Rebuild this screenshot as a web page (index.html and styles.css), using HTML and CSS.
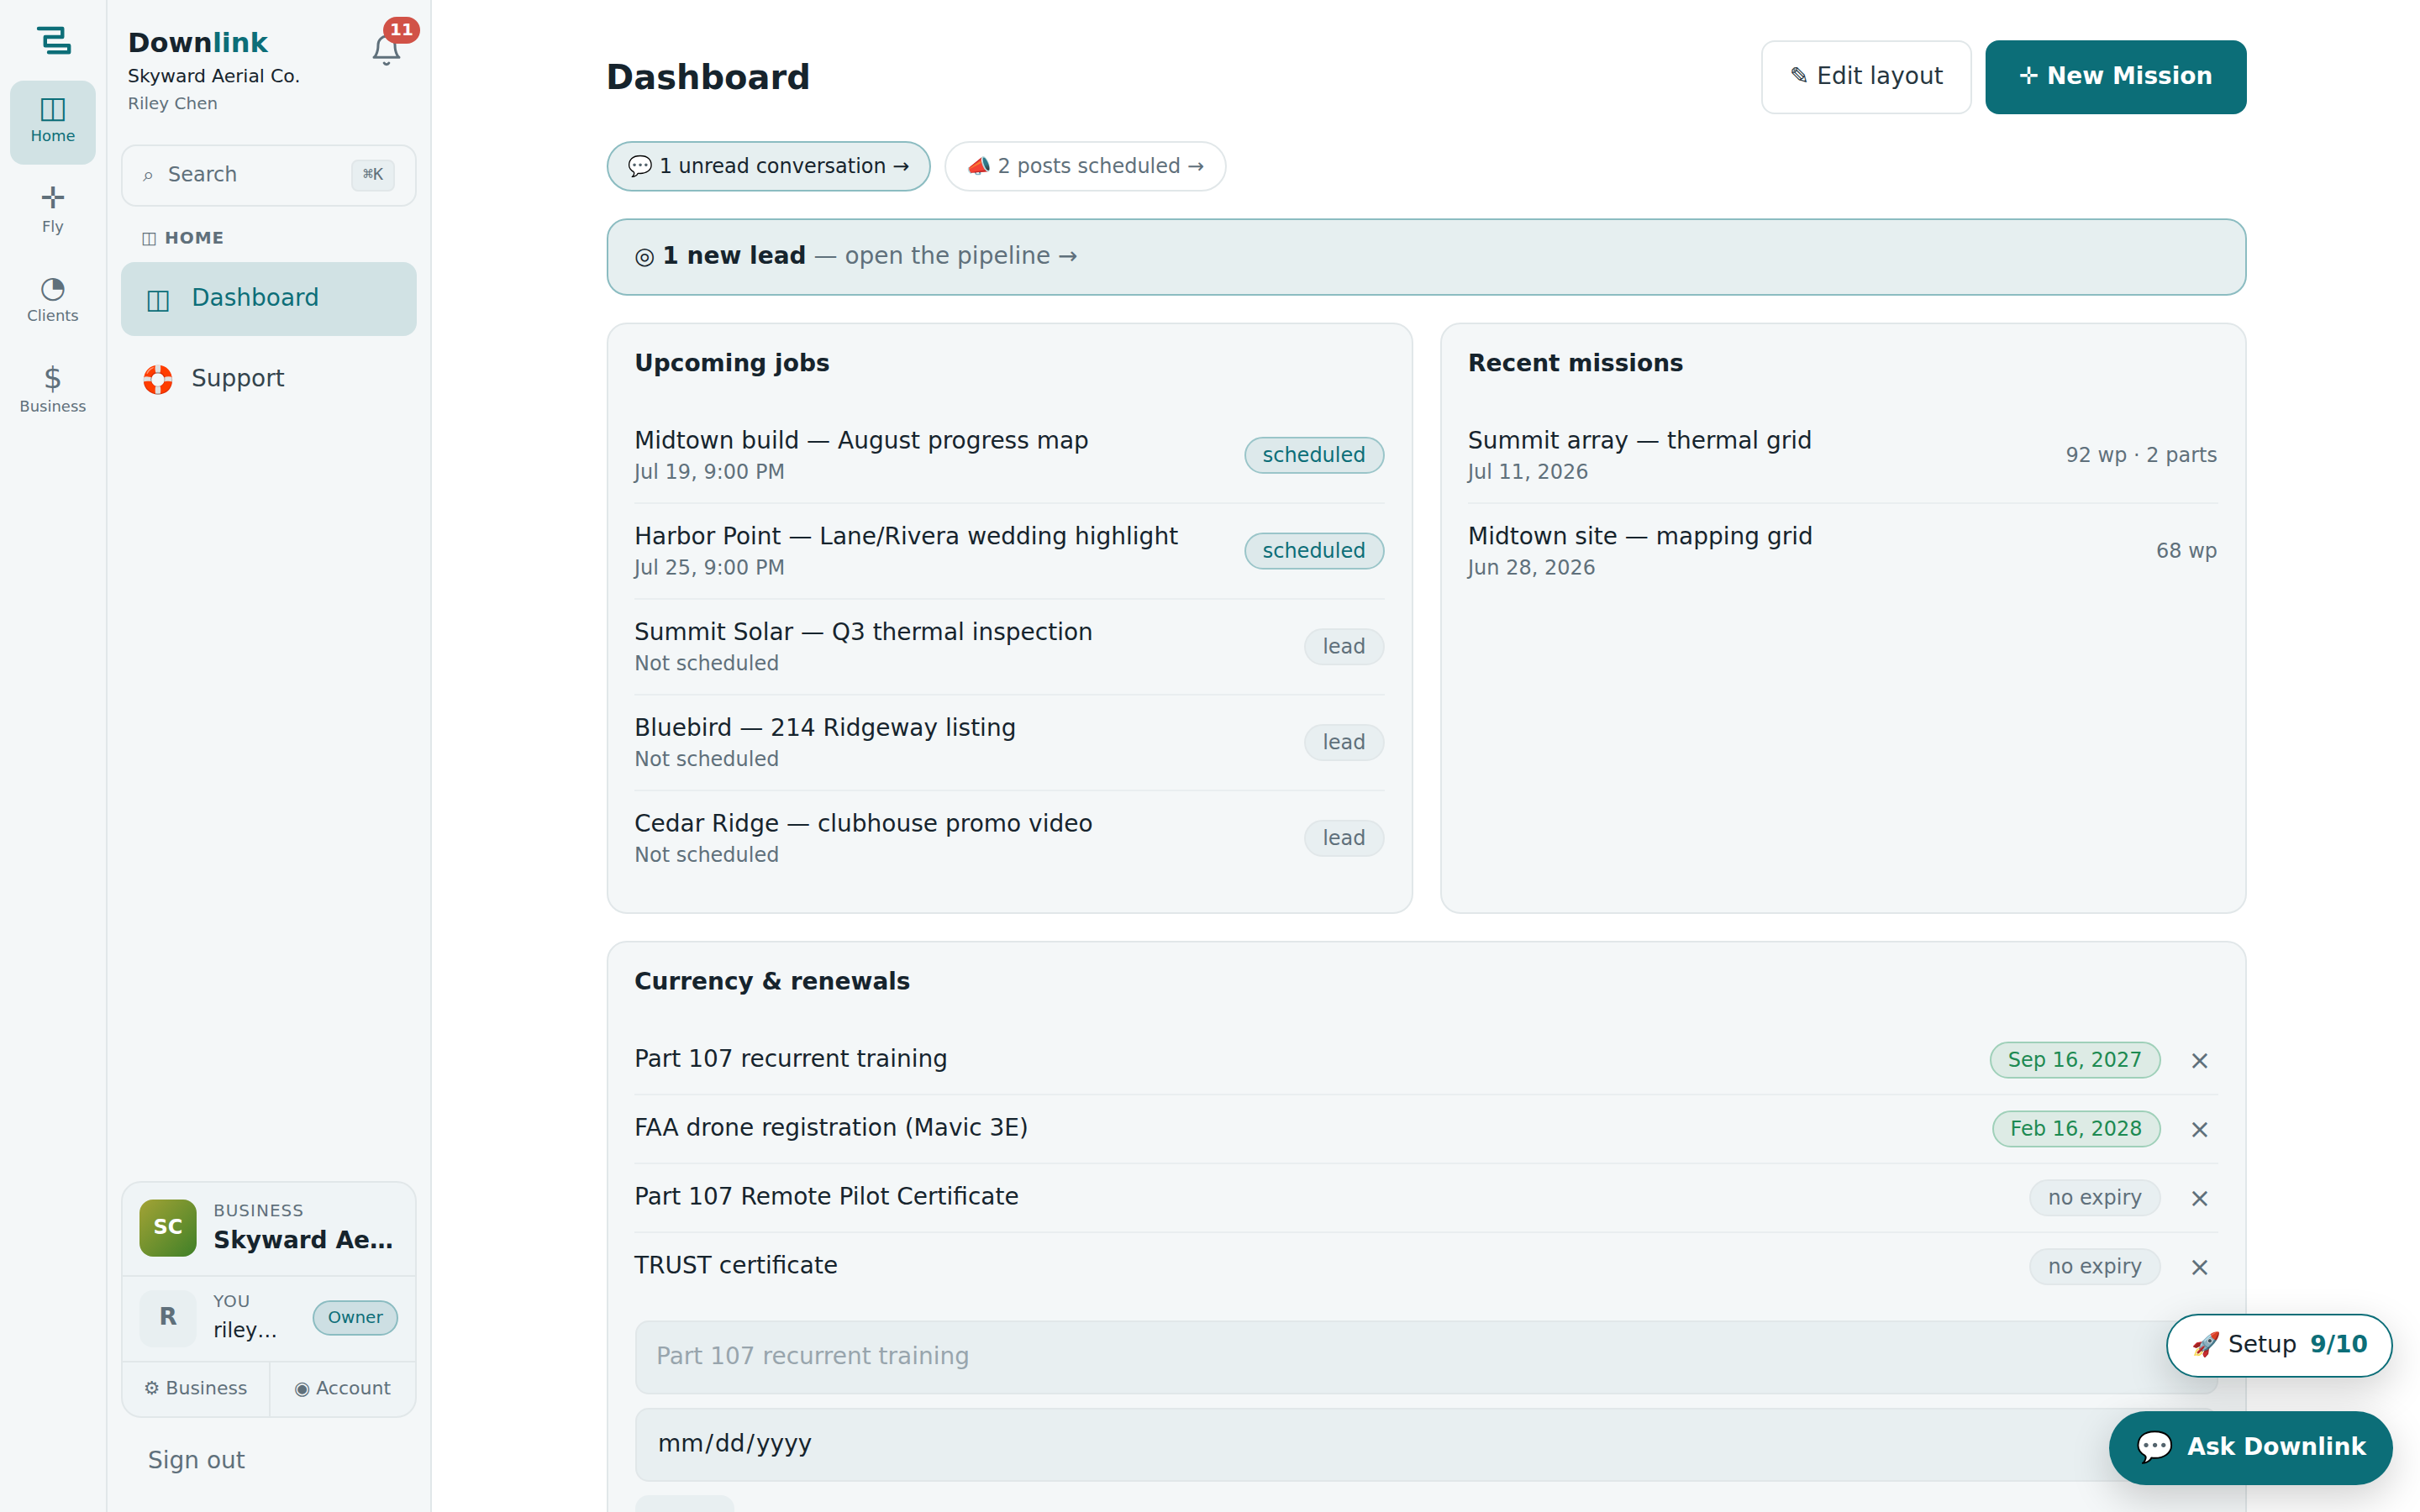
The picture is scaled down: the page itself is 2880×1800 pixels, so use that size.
FILE: index.html
```html
<!DOCTYPE html>
<html lang="en">
<head>
<meta charset="utf-8">
<title>Downlink — Dashboard</title>
<link rel="stylesheet" href="styles.css">
</head>
<body>
<div class="app">
  <nav class="rail">
    <svg class="logo" viewBox="0 0 44 36" width="44" height="36" fill="none" stroke="currentColor" stroke-width="4.4" stroke-linecap="round" stroke-linejoin="round"><path d="M4 4H32.3V14H11.8V24.2H40.2V32.2H16"/></svg>
    <a class="rail-item active"><span class="rail-icon">◫</span><span class="rail-label">Home</span></a>
    <a class="rail-item short"><span class="rail-icon">✛</span><span class="rail-label">Fly</span></a>
    <a class="rail-item"><span class="rail-icon">◔</span><span class="rail-label">Clients</span></a>
    <a class="rail-item"><span class="rail-icon">$</span><span class="rail-label">Business</span></a>
  </nav>

  <aside class="sidebar">
    <header class="brand">
      <div class="brand-text">
        <div class="brand-name">Down<span>link</span></div>
        <div class="brand-org">Skyward Aerial Co.</div>
        <div class="brand-user">Riley Chen</div>
      </div>
      <div class="bell">
        <svg viewBox="0 0 24 24" width="40" height="40" fill="none" stroke="currentColor" stroke-width="1.8" stroke-linecap="round" stroke-linejoin="round"><path d="M6 8a6 6 0 0 1 12 0c0 7 3 9 3 9H3s3-2 3-9"/><path d="M10.3 21a1.94 1.94 0 0 0 3.4 0"/></svg>
        <span class="bell-count">11</span>
      </div>
    </header>
    <div class="search"><span class="search-icon">⌕</span><span class="search-label">Search</span><kbd>⌘K</kbd></div>
    <div class="nav-heading"><span class="nav-heading-icon">◫</span>HOME</div>
    <a class="nav-item active"><span class="nav-icon">◫</span>Dashboard</a>
    <a class="nav-item"><span class="nav-icon">🛟</span>Support</a>

    <div class="account">
      <div class="account-row business">
        <span class="avatar avatar-business">SC</span>
        <div class="account-text"><div class="account-kind">BUSINESS</div><div class="account-name">Skyward Aerial Co.</div></div>
      </div>
      <div class="account-row you">
        <span class="avatar">R</span>
        <div class="account-text"><div class="account-kind">YOU</div><div class="account-mail">riley@skyward.co</div></div>
        <span class="role">Owner</span>
      </div>
      <div class="account-links"><a>⚙ Business</a><a>◉ Account</a></div>
    </div>
    <a class="signout">Sign out</a>
  </aside>

  <main class="main">
    <div class="content">
      <div class="page-head">
        <h1>Dashboard</h1>
        <div class="actions"><button class="btn">✎ Edit layout</button><button class="btn primary">✛ New Mission</button></div>
      </div>
      <div class="chips"><a class="chip on">💬 1 unread conversation →</a><a class="chip">📣 2 posts scheduled →</a></div>
      <a class="banner"><span>◎ <b>1 new lead</b> <span class="muted">— open the pipeline →</span></span></a>
      <div class="cards">
        <section class="card">
          <h2>Upcoming jobs</h2>
          <ul class="rows">
            <li><div><div class="row-title">Midtown build — August progress map</div><div class="row-sub">Jul 19, 9:00 PM</div></div><span class="tag accent">scheduled</span></li>
            <li><div><div class="row-title">Harbor Point — Lane/Rivera wedding highlight</div><div class="row-sub">Jul 25, 9:00 PM</div></div><span class="tag accent">scheduled</span></li>
            <li><div><div class="row-title">Summit Solar — Q3 thermal inspection</div><div class="row-sub">Not scheduled</div></div><span class="tag">lead</span></li>
            <li><div><div class="row-title">Bluebird — 214 Ridgeway listing</div><div class="row-sub">Not scheduled</div></div><span class="tag">lead</span></li>
            <li><div><div class="row-title">Cedar Ridge — clubhouse promo video</div><div class="row-sub">Not scheduled</div></div><span class="tag">lead</span></li>
          </ul>
        </section>
        <section class="card">
          <h2>Recent missions</h2>
          <ul class="rows">
            <li><div><div class="row-title">Summit array — thermal grid</div><div class="row-sub">Jul 11, 2026</div></div><span class="row-meta">92 wp · 2 parts</span></li>
            <li><div><div class="row-title">Midtown site — mapping grid</div><div class="row-sub">Jun 28, 2026</div></div><span class="row-meta">68 wp</span></li>
          </ul>
        </section>
      </div>
      <section class="card">
        <h2>Currency &amp; renewals</h2>
        <ul class="rows compact">
          <li><span class="row-title">Part 107 recurrent training</span><span class="tag good">Sep 16, 2027</span><span class="remove">×</span></li>
          <li><span class="row-title">FAA drone registration (Mavic 3E)</span><span class="tag good">Feb 16, 2028</span><span class="remove">×</span></li>
          <li><span class="row-title">Part 107 Remote Pilot Certificate</span><span class="tag">no expiry</span><span class="remove">×</span></li>
          <li><span class="row-title">TRUST certificate</span><span class="tag">no expiry</span><span class="remove">×</span></li>
        </ul>
        <form class="add-form">
          <input type="text" placeholder="Part 107 recurrent training">
          <input type="date">
          <button type="button" class="add" aria-label="Add"></button>
        </form>
      </section>
    </div>
  </main>
</div>

<div class="floating">
  <a class="setup"><span>🚀 Setup</span><b>9/10</b></a>
  <a class="ask"><span class="ask-icon">💬</span>Ask Downlink</a>
</div>
</body>
</html>
```

FILE: styles.css
```css
:root {
  --ink: #16242d;
  --ink-soft: #33444d;
  --muted: #5f707b;
  --panel: #f4f7f8;
  --raised: #e8eff1;
  --line: #e1e7e9;
  --accent: #0c6e78;
  --accent-line: #8bbcc1;
}

* { box-sizing: border-box; }

body {
  margin: 0;
  height: 1800px;
  overflow: hidden;
  background: #fff;
  color: var(--ink);
  font: 28px/42px "DejaVu Sans", sans-serif;
}

h1, h2, ul { margin: 0; padding: 0; }
ul { list-style: none; }
button, input { font: inherit; }

.app { display: flex; height: 1800px; overflow: hidden; }

/* Icon rail */
.rail {
  flex: none;
  width: 128px;
  padding: 30px 12px 0;
  border-right: 2px solid var(--line);
  background: var(--panel);
  display: flex;
  flex-direction: column;
  align-items: stretch;
  gap: 8px;
}
.logo { align-self: center; margin-bottom: 22px; margin-left: 2px; color: var(--accent); }
.rail-item {
  height: 100px;
  border-radius: 16px;
  display: flex;
  flex-direction: column;
  align-items: center;
  padding-top: 14px;
  color: var(--muted);
}
.rail-item.short { height: 98px; }
.rail-item.active { background: #d1e2e4; color: var(--accent); }
.rail-icon { font-size: 36px; line-height: 36px; height: 38px; }
.rail-label { font-size: 18px; line-height: 28px; }

/* Sidebar */
.sidebar {
  flex: none;
  width: 386px;
  padding: 29px 16px 0;
  border-right: 2px solid var(--line);
  background: var(--panel);
  display: flex;
  flex-direction: column;
}
.brand { height: 143px; padding: 0 16px 0 8px; display: flex; justify-content: space-between; }
.brand-name { font-size: 32px; line-height: 44px; font-weight: 700; }
.brand-name span { color: var(--accent); }
.brand-org { font-size: 22px; line-height: 35px; }
.brand-user { font-size: 20px; line-height: 30px; color: var(--muted); }
.bell { position: relative; width: 40px; height: 40px; margin-top: 11px; color: var(--muted); }
.bell svg { display: block; }
.bell-count {
  position: absolute;
  left: 16px;
  top: -20px;
  width: 44px;
  height: 32px;
  border-radius: 16px;
  background: #d15247;
  color: #fff;
  font-size: 20px;
  line-height: 31px;
  font-weight: 700;
  text-align: center;
}
.search {
  height: 74px;
  padding: 0 24px;
  border: 2px solid var(--line);
  border-radius: 18px;
  display: flex;
  align-items: center;
  color: var(--muted);
  font-size: 24px;
}
.search-icon { width: 30px; line-height: 70px; margin-top: -2px; }
.search-label { flex: 1; line-height: 70px; margin-top: -2px; }
kbd {
  width: 52px;
  height: 38px;
  border: 2px solid var(--line);
  border-radius: 8px;
  background: var(--raised);
  font: 20px/30px "DejaVu Sans Mono", monospace;
  text-align: center;
}
.nav-heading {
  height: 66px;
  padding-left: 24px;
  display: flex;
  gap: 9px;
  font-size: 20px;
  line-height: 74px;
  font-weight: 700;
  letter-spacing: 1px;
  color: var(--muted);
}
.nav-heading-icon { font-weight: 400; letter-spacing: 0; }
.nav-item {
  height: 88px;
  margin-bottom: 8px;
  border-radius: 16px;
  display: flex;
  align-items: center;
  gap: 20px;
  padding: 0 24px 3px;
  color: var(--ink-soft);
}
.nav-item.active { background: #d1e2e4; color: var(--accent); }
.nav-icon { width: 40px; display: flex; justify-content: center; padding-top: 2px; font-size: 32px; }

.account {
  margin-top: auto;
  height: 282px;
  border: 2px solid var(--line);
  border-radius: 24px;
  background: #eff4f6;
}
.account-row {
  display: flex;
  align-items: flex-start;
  gap: 20px;
  padding: 20px 20px 0;
  border-bottom: 2px solid var(--line);
}
.account-row.business { height: 112px; }
.account-row.you { height: 102px; padding-top: 16px; }
.avatar {
  flex: none;
  width: 68px;
  height: 68px;
  border-radius: 16px;
  background: var(--raised);
  color: var(--muted);
  font-weight: 700;
  line-height: 64px;
  text-align: center;
}
.avatar-business { background: linear-gradient(135deg, #a3a335, #3f8028); color: #fff; font-size: 24px; line-height: 67px; }
.account-text { flex: 1; min-width: 0; }
.account-kind { font-size: 20px; line-height: 27px; letter-spacing: 1px; color: var(--muted); }
.account-name, .account-mail { overflow: hidden; white-space: nowrap; text-overflow: ellipsis; }
.account-name { font-weight: 700; line-height: 43px; }
.account-mail { font-size: 24px; line-height: 42px; }
.role {
  flex: none;
  align-self: center;
  width: 102px;
  height: 42px;
  margin-top: -18px;
  border: 2px solid var(--accent-line);
  border-radius: 21px;
  background: #cddfe3;
  color: var(--accent);
  font-size: 20px;
  line-height: 36px;
  text-align: center;
}
.account-links { height: 64px; display: flex; }
.account-links a { flex: 1; padding-right: 1px; text-align: center; font-size: 22px; line-height: 61px; color: var(--muted); }
.account-links a:first-child { flex: 0 0 174px; }
.account-links a + a { border-left: 2px solid var(--line); }
.signout { height: 112px; padding-left: 32px; line-height: 102px; color: var(--muted); }

/* Main column */
.main { flex: 1; padding: 48px 206px 0 208px; }
.page-head { height: 88px; display: flex; align-items: center; justify-content: space-between; }
h1 { font-size: 40px; line-height: 52px; margin-left: -1px; }
.actions { display: flex; gap: 16px; }
.btn {
  height: 88px;
  padding: 0 32px 3px;
  border: 2px solid var(--line);
  border-radius: 16px;
  background: #fff;
  color: #26363f;
}
.btn.primary { padding: 0 40.5px 3px 40px; border: 0; background: var(--accent); color: #fff; font-weight: 700; }
.chips { display: flex; gap: 16px; margin-top: 32px; }
.chip {
  height: 60px;
  padding: 0 24.5px 0 23.5px;
  border: 2px solid var(--line);
  border-radius: 30px;
  color: var(--muted);
  font-size: 24px;
  line-height: 56px;
}
.chip.on { padding: 0 24px 0 23px; border-color: var(--accent-line); background: #e6eff0; color: var(--ink); }
.banner {
  height: 92px;
  margin-top: 32px;
  padding: 0 31px 2px;
  border: 2px solid var(--accent-line);
  border-radius: 24px;
  background: #e6eff0;
  display: flex;
  align-items: center;
}
.muted { color: var(--muted); }
.cards { display: grid; grid-template-columns: 1fr 1fr; gap: 32px; margin: 32px 0; }
.card { padding: 29px 32px 32px 31px; border: 2px solid var(--line); border-radius: 24px; background: var(--panel); }
h2 { height: 71px; font-size: 28px; line-height: 36px; }

.rows li {
  height: 114px;
  border-bottom: 2px solid #e9eef0;
  display: flex;
  align-items: center;
  justify-content: space-between;
}
.rows li:last-child { border-bottom-color: transparent; }
.cards .rows li:last-child { height: 112px; border-bottom: 0; }
.cards .card + .card .rows li:last-child { height: 114px; border-bottom: 2px solid transparent; }
.row-title { line-height: 40px; }
.row-sub { font-size: 24px; line-height: 35px; color: var(--muted); }
.row-meta { padding-right: 1px; font-size: 24px; color: var(--muted); }
.tag {
  flex: none;
  height: 44px;
  padding: 0 20.5px 0 20px;
  border: 2px solid var(--line);
  border-radius: 22px;
  background: var(--raised);
  color: var(--muted);
  font-size: 24px;
  line-height: 40px;
}
.tag.accent { border-color: #9ac5c9; background: #dde9eb; color: var(--accent); }
.tag.good { border-color: #9fd0b9; background: #ddebe5; color: #1d8a52; }
.rows.compact li { height: 82px; }
.rows.compact .row-title { flex: 1; padding-bottom: 2px; }
.remove { width: 44px; margin-left: 24px; text-align: center; font-size: 32px; color: var(--muted); }

.add-form { display: flex; flex-direction: column; align-items: flex-start; gap: 16px; margin: 22px 0 0 1px; }
.add-form input {
  width: 100%;
  height: 88px;
  padding: 0 24px 3px 23px;
  border: 2px solid var(--line);
  border-radius: 16px;
  background: var(--raised);
  color: var(--ink);
}
.add-form input::placeholder { color: #98a5ad; }
.add-form input::-webkit-datetime-edit-month-field,
.add-form input::-webkit-datetime-edit-day-field,
.add-form input::-webkit-datetime-edit-year-field { padding: 0 2px; }
.add { width: 118px; height: 88px; border: 0; border-radius: 16px; background: var(--raised); }

/* Launchers pinned over the page corner */
.floating {
  position: absolute;
  right: 32px;
  bottom: 32px;
  display: flex;
  flex-direction: column;
  align-items: flex-end;
  gap: 40px;
}
.setup, .ask { display: flex; align-items: center; box-shadow: 0 16px 48px rgba(0, 0, 0, .18); }
.setup {
  width: 270px;
  height: 76px;
  padding: 0 28px 2px;
  justify-content: space-between;
  border: 2px solid var(--accent);
  border-radius: 38px;
  background: #fff;
}
.setup b { color: var(--accent); }
.ask {
  width: 338px;
  height: 88px;
  padding: 0 32px 2px;
  justify-content: space-between;
  border-radius: 44px;
  background: var(--accent);
  color: #fff;
  font-weight: 700;
}
.ask-icon { font-size: 36px; font-weight: 400; }
```
